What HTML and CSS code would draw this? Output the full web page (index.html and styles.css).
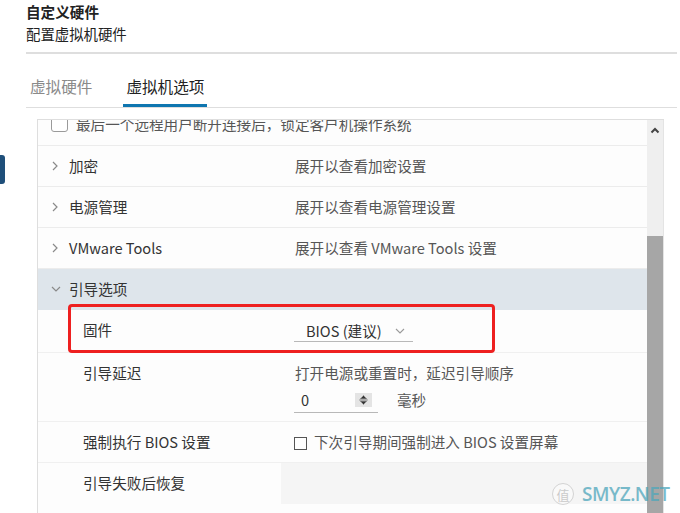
FILE: index.html
```html
<!DOCTYPE html>
<html>
<head>
  <meta name="viewport" content="width=device-width, initial-scale=1.0">
  <title>自定义硬件</title>
  <link rel="stylesheet" href="styles.css">
</head>
<body>
  <!-- edge of the dialog behind -->
  <div class="side-tab"></div>

  <div class="page">
    <div class="title">自定义硬件</div>
    <div class="subtitle">配置虚拟机硬件</div>
    <div class="rule"></div>

    <div class="tabs">
      <div class="tab">虚拟硬件</div>
      <div class="tab active">虚拟机选项</div>
    </div>

    <div class="panel">
      <div class="list">
        <div class="row clipped">
          <div class="clipped-inner">
            <span class="round-check"></span>
            <span class="value">最后一个远程用户断开连接后，锁定客户机操作系统</span>
          </div>
        </div>

        <div class="row">
          <div class="label-cell"><span class="chev"><svg width="8" height="12" viewBox="0 0 8 12"><polyline points="2,2 6,6 2,10" /></svg></span>加密</div>
          <div class="value-cell value">展开以查看加密设置</div>
        </div>
        <div class="row">
          <div class="label-cell"><span class="chev"><svg width="8" height="12" viewBox="0 0 8 12"><polyline points="2,2 6,6 2,10" /></svg></span>电源管理</div>
          <div class="value-cell value">展开以查看电源管理设置</div>
        </div>
        <div class="row">
          <div class="label-cell"><span class="chev"><svg width="8" height="12" viewBox="0 0 8 12"><polyline points="2,2 6,6 2,10" /></svg></span>VMware Tools</div>
          <div class="value-cell value">展开以查看 VMware Tools 设置</div>
        </div>

        <div class="row section">
          <div class="label-cell"><span class="chev"><svg width="10" height="12" viewBox="0 0 10 12"><polyline points="1,4 5,8 9,4" /></svg></span>引导选项</div>
        </div>

        <div class="row sub">
          <div class="label-cell">固件</div>
          <div class="value-cell">
            <div class="select">
              <span>BIOS (建议)</span>
              <svg width="10" height="6" viewBox="0 0 10 6"><polyline points="1,1 5,5 9,1" /></svg>
            </div>
          </div>
          <div class="highlight"></div>
        </div>

        <div class="row sub delay-row">
          <div class="label-cell">引导延迟</div>
          <div class="value-cell value">
            <div>打开电源或重置时，延迟引导顺序</div>
            <div class="delay">
              <div class="number">
                <span>0</span>
                <span class="spinner">
                  <svg width="17" height="14" viewBox="0 0 17 14"><polygon points="5,6 8.5,2.5 12,6" /><line x1="4" y1="7" x2="13" y2="7" /><polygon points="5,8 8.5,11.5 12,8" /></svg>
                </span>
              </div>
              <span class="unit">毫秒</span>
            </div>
          </div>
        </div>

        <div class="row sub">
          <div class="label-cell">强制执行 BIOS 设置</div>
          <div class="value-cell value">
            <span class="square-check"></span>下次引导期间强制进入 BIOS 设置屏幕
          </div>
        </div>

        <div class="row sub last">
          <div class="label-cell">引导失败后恢复</div>
          <div class="value-cell empty"></div>
        </div>
      </div>

      <div class="scrollbar">
        <div class="scroll-up">
          <svg width="10" height="7" viewBox="0 0 10 7"><polyline points="1.5,5.5 5,2 8.5,5.5" /></svg>
        </div>
        <div class="thumb"></div>
      </div>
    </div>
  </div>

  <!-- watermark of the screenshot -->
  <div class="watermark">
    <span class="wm-circle">值</span>
    <span class="wm-text">SMYZ.NET</span>
  </div>
</body>
</html>
```

FILE: styles.css
```css
* {
  box-sizing: border-box;
}

body {
  margin: 0;
  font-family: "Noto Sans CJK SC", "Noto Sans", sans-serif;
  background-color: #fff;
  color: #333;
  overflow: hidden;
  height: 513px;
  position: relative;
}

.side-tab {
  position: absolute;
  left: 0;
  top: 155px;
  width: 5px;
  height: 29px;
  background-color: #1f4f7a;
  border-radius: 0 3px 3px 0;
}

.page {
  padding: 0 3px 0 26px;
}

.title {
  font-size: 14.6px;
  font-weight: bold;
  line-height: 20px;
  padding-top: 2px;
  color: #222;
}

.subtitle {
  font-size: 14.4px;
  line-height: 20px;
  margin-top: 2px;
  color: #222;
}

.rule {
  margin-top: 8px;
  border-top: 2px solid #dedede;
}

.tabs {
  display: flex;
  margin-top: 15px;
  border-bottom: 1px solid #dedede;
}

.tab {
  font-size: 15.6px;
  line-height: 35px;
  padding: 0 3px;
  margin-left: 1px;
  color: #8a8a8a;
  border-bottom: 3px solid transparent;
}

.tab.active {
  margin-left: 28px;
  color: #222;
  border-bottom-color: #0f76b0;
}

.panel {
  display: flex;
  margin-top: 11px;
  margin-left: 11px;
  width: 627px;
  height: 400px;
  border-top: 1px solid #dedede;
  border-left: 1px solid #dedede;
}

.list {
  flex: 1;
  background-color: #fdfdfd;
  font-size: 14.6px;
}

.row {
  position: relative;
  display: flex;
  border-bottom: 1px solid #ececec;
}

.label-cell {
  display: flex;
  align-items: center;
  width: 243px;
  padding: 10px 0 10px 13px;
  line-height: 20px;
  color: #333;
}

.value-cell {
  flex: 1;
  padding: 10px 0 10px 14px;
  line-height: 20px;
}

.value {
  color: #565656;
}

.chev {
  display: inline-flex;
  width: 18px;
}

.chev svg {
  fill: none;
  stroke: #8a8a8a;
  stroke-width: 1.2;
}

/* the list is scrolled: the top row shows only its lower part */
.clipped {
  height: 26px;
  overflow: hidden;
}

.clipped-inner {
  display: flex;
  align-items: center;
  margin-top: -17px;
  height: 40px;
  padding-left: 13px;
}

.round-check {
  display: inline-block;
  width: 17px;
  height: 17px;
  border: 1px solid #9a9a9a;
  border-radius: 3px;
  margin-right: 8px;
  background-color: #fff;
}

.section {
  background-color: #dee5eb;
  border-bottom: none;
}

.section .label-cell {
  padding-bottom: 11px;
}

.sub .label-cell {
  padding-left: 45px;
  align-items: flex-start;
}

.sub {
  border-bottom-color: #f0f0f0;
}

.select {
  display: flex;
  align-items: center;
  margin-left: -1px;
  width: 119px;
  height: 22px;
  padding-left: 12px;
  border-bottom: 1px solid #b8b8b8;
  color: #333;
}

.select span {
  flex: 1;
}

.select svg {
  margin-right: 8px;
  fill: none;
  stroke: #9a9a9a;
  stroke-width: 1.1;
}

.highlight {
  position: absolute;
  left: 30px;
  top: -6px;
  width: 427px;
  height: 49px;
  border: 3px solid #ee2020;
  border-radius: 4px;
}

.delay-row .value-cell {
  padding-bottom: 8px;
}

.delay {
  display: flex;
  align-items: center;
  margin-top: 4px;
}

.number {
  display: flex;
  align-items: center;
  margin-left: -1px;
  width: 84px;
  height: 26px;
  padding-left: 7px;
  border-bottom: 1px solid #b8b8b8;
  color: #333;
}

.number span:first-child {
  flex: 1;
}

.spinner {
  display: inline-flex;
  margin-right: 6px;
  background-color: #e4e4e4;
}

.spinner svg {
  fill: #333;
  stroke: #999;
  stroke-width: 1;
}

.unit {
  margin-left: 19px;
}

.square-check {
  display: inline-block;
  vertical-align: -2px;
  width: 13px;
  height: 13px;
  border: 1px solid #555;
  margin: 0 7px 0 -1px;
  background-color: #fff;
}

.last {
  border-bottom: none;
}

.empty {
  background-color: #f5f5f5;
  height: 41px;
}

.scrollbar {
  position: relative;
  width: 17px;
  background-color: #efefef;
  border-right: 1px solid #e4e4e4;
}

.scroll-up {
  display: flex;
  justify-content: center;
  padding-top: 7px;
}

.scroll-up svg {
  fill: none;
  stroke: #444;
  stroke-width: 2;
}

.thumb {
  position: absolute;
  left: 0;
  right: 0;
  top: 116px;
  bottom: 0;
  background-color: #a6a6a6;
}

.watermark {
  position: absolute;
  left: 552px;
  top: 481px;
  display: flex;
  align-items: center;
  opacity: 0.75;
}

.wm-circle {
  display: inline-flex;
  align-items: center;
  justify-content: center;
  width: 22px;
  height: 22px;
  border: 1.5px solid #c8c8c8;
  border-radius: 50%;
  font-size: 13px;
  color: #bdbdbd;
  background-color: rgba(255, 255, 255, 0.6);
}

.wm-text {
  margin-left: 8px;
  font-family: "Open Sans", sans-serif;
  font-size: 19px;
  font-weight: 600;
  letter-spacing: -0.5px;
  color: #4ea6bb;
}
```
